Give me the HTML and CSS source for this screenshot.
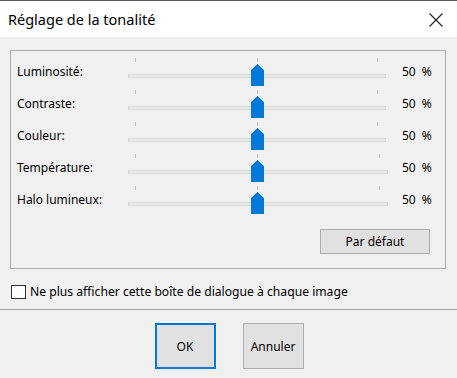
FILE: index.html
```html
<!DOCTYPE html>
<html lang="fr">
<head>
<meta charset="utf-8">
<link rel="stylesheet" href="styles.css">
</head>
<body>
<div class="dialog">
  <div class="titlebar">
    <span class="title">Réglage de la tonalité</span>
    <svg class="close" width="14" height="14" viewBox="0 0 14 14"><path d="M0.5 0.5 L13.5 13.5 M13.5 0.5 L0.5 13.5" stroke="#222" stroke-width="1.1" fill="none"/></svg>
  </div>
  <div class="content">
    <div class="group">
      <div class="row">
        <span class="label">Luminosité:</span>
        <div class="slider"><i class="tick t-l"></i><i class="tick t-m"></i><i class="tick t-r"></i><div class="track"></div><svg class="thumb" width="13" height="22" viewBox="0 0 13 22"><path d="M0 6 L6.5 0 L13 6 L13 22 L0 22 Z" fill="#0078d7"/></svg></div>
        <span class="pct">50 %</span>
      </div>
      <div class="row">
        <span class="label">Contraste:</span>
        <div class="slider"><i class="tick t-l"></i><i class="tick t-m"></i><i class="tick t-r"></i><div class="track"></div><svg class="thumb" width="13" height="22" viewBox="0 0 13 22"><path d="M0 6 L6.5 0 L13 6 L13 22 L0 22 Z" fill="#0078d7"/></svg></div>
        <span class="pct">50 %</span>
      </div>
      <div class="row">
        <span class="label">Couleur:</span>
        <div class="slider"><i class="tick t-l"></i><i class="tick t-m"></i><i class="tick t-r"></i><div class="track"></div><svg class="thumb" width="13" height="22" viewBox="0 0 13 22"><path d="M0 6 L6.5 0 L13 6 L13 22 L0 22 Z" fill="#0078d7"/></svg></div>
        <span class="pct">50 %</span>
      </div>
      <div class="row">
        <span class="label">Température:</span>
        <div class="slider wide"><i class="tick t-l"></i><i class="tick t-m"></i><i class="tick t-r"></i><div class="track"></div><svg class="thumb" width="13" height="22" viewBox="0 0 13 22"><path d="M0 6 L6.5 0 L13 6 L13 22 L0 22 Z" fill="#0078d7"/></svg></div>
        <span class="pct">50 %</span>
      </div>
      <div class="row">
        <span class="label">Halo lumineux:</span>
        <div class="slider wide"><i class="tick t-l"></i><i class="tick t-m"></i><i class="tick t-r"></i><div class="track"></div><svg class="thumb" width="13" height="22" viewBox="0 0 13 22"><path d="M0 6 L6.5 0 L13 6 L13 22 L0 22 Z" fill="#0078d7"/></svg></div>
        <span class="pct">50 %</span>
      </div>
      <div class="group-actions">
        <button class="btn default-btn">Par défaut</button>
      </div>
    </div>
    <label class="check">
      <span class="box"></span>
      <span class="check-text">Ne plus afficher cette boîte de dialogue à chaque image</span>
    </label>
  </div>
  <div class="footer">
    <button class="btn ok">OK</button>
    <button class="btn cancel">Annuler</button>
  </div>
</div>
</body>
</html>
```
FILE: styles.css
```css
* { box-sizing: border-box; }
html, body {
  margin: 0;
  padding: 0;
  background: #f0f0f0;
}
body {
  font-family: "Noto Sans", "Open Sans", sans-serif;
  font-size: 12px;
  color: #000;
}
.dialog {
  width: 457px;
  height: 378px;
  display: flex;
  flex-direction: column;
  background: #f0f0f0;
}
.titlebar {
  height: 37px;
  background: #fff;
  border-top: 1px solid #5a5a5a;
  display: flex;
  align-items: center;
  justify-content: space-between;
  padding: 0 14px 0 8px;
}
.title {
  font-size: 14.5px;
  line-height: 18px;
  color: #000;
  margin-top: -1px;
}
.close {
  display: block;
  margin-top: 1px;
}
.content {
  padding: 13px 11px 0 10px;
}
.group {
  border: 1px solid #a9a9a9;
  height: 219px;
  padding: 6px 15px 0 6px;
}
.row {
  display: flex;
  align-items: flex-start;
  height: 32px;
}
.label {
  flex: none;
  width: 111px;
  line-height: 16px;
  padding-top: 7px;
  white-space: nowrap;
}
.slider {
  flex: none;
  position: relative;
  width: 258px;
  height: 32px;
}
.slider.wide { width: 260px; }
.track {
  position: absolute;
  left: 0;
  right: 0;
  top: 17px;
  height: 4px;
  background: #e7e7e7;
  border: 1px solid #d9d9d9;
}
.tick {
  position: absolute;
  top: 1px;
  width: 1px;
  height: 4px;
  background: #c4c4c4;
}
.t-l { left: 7px; }
.t-m { left: 129px; }
.t-r { right: 8px; }
.thumb {
  position: absolute;
  left: 123px;
  top: 7px;
  display: block;
}
.pct {
  flex: none;
  margin-left: 16px;
  line-height: 16px;
  padding-top: 7px;
  white-space: nowrap;
  word-spacing: 3px;
}
.slider.wide + .pct { margin-left: 14px; }
.group-actions {
  display: flex;
  justify-content: flex-end;
  margin-top: 12px;
}
.btn {
  font-family: "Noto Sans", "Open Sans", sans-serif;
  font-size: 12px;
  color: #000;
  background: #e1e1e1;
  border: 1px solid #adadad;
  padding: 0;
  margin: 0;
}
.default-btn {
  width: 110px;
  height: 25px;
}
.check {
  display: flex;
  align-items: center;
  margin-top: 15px;
  margin-left: 1px;
  height: 15px;
}
.box {
  flex: none;
  width: 15px;
  height: 14px;
  border: 1px solid #333;
  background: #fff;
}
.check-text {
  margin-left: 4px;
  line-height: 16px;
  white-space: nowrap;
  font-size: 12.15px;
}
.footer {
  margin-top: 10px;
  border-top: 1px solid #a0a0a0;
  display: flex;
  justify-content: center;
  gap: 27px;
  padding-top: 13px;
  padding-left: 1px;
}
.ok, .cancel {
  width: 61px;
  height: 46px;
}
.ok {
  border: 2px solid #0078d7;
}
```
